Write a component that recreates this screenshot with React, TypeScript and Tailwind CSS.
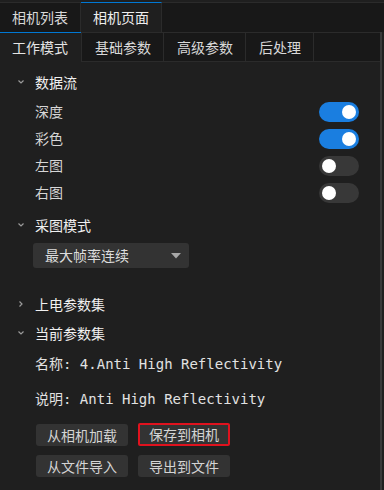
import { useState } from "react";

const cjk = "font-['Noto_Sans_CJK_SC',sans-serif]";
const mono = "font-['DejaVu_Sans_Mono','Noto_Sans_CJK_SC',monospace]";

function Chevron({ open }: { open: boolean }) {
  return (
    <svg width="10" height="10" viewBox="0 0 10 10" className="shrink-0">
      {open ? (
        <path d="M2.5 3.5 L5 6 L7.5 3.5" fill="none" stroke="#9a9a9a" strokeWidth="1.2" />
      ) : (
        <path d="M3.5 2.5 L6 5 L3.5 7.5" fill="none" stroke="#9a9a9a" strokeWidth="1.2" />
      )}
    </svg>
  );
}

function Toggle({ on, onClick }: { on: boolean; onClick: () => void }) {
  return (
    <button
      onClick={onClick}
      className={`w-[40px] h-[20px] rounded-full flex items-center px-[3px] ${
        on ? "bg-[#1a7ee0] justify-end" : "bg-[#383838] justify-start"
      }`}
    >
      <span className="w-[14px] h-[14px] rounded-full bg-white" />
    </button>
  );
}

function SectionHeader({ title, open }: { title: string; open: boolean }) {
  return (
    <div className="h-[28px] flex items-center pl-[16px] gap-[9px]">
      <Chevron open={open} />
      <span className="text-[14px] text-[#f0f0f0]">{title}</span>
    </div>
  );
}

export default function App() {
  const [streams, setStreams] = useState({ 深度: true, 彩色: true, 左图: false, 右图: false });

  return (
    <div className={`w-[384px] h-[490px] bg-[#1f1f1f] overflow-hidden ${cjk}`}>
      {/* top tabs */}
      <div className="mt-[2px] h-[30px] flex bg-[#181818] border-t border-[#2b2b2b]">
        <div className="w-[81px] flex items-center px-[12px] text-[14px] text-[#d8d8d8] border-r border-[#2b2b2b]">
          相机列表
        </div>
        <div className="w-[81px] -mt-px flex items-center px-[12px] text-[14px] text-[#eeeeee] bg-[#1f1f1f] border-t border-[#0078d4] border-r border-r-[#2b2b2b]">
          相机页面
        </div>
      </div>

      <div className="flex">
        <div className="w-[380px] shrink-0">
          {/* sub tabs */}
          <div className="h-[30px] flex">
            <div className="w-[81px] flex items-center px-[12px] text-[14px] text-[#e4e4e4] bg-[#1f1f1f] border-t border-[#0078d4]">
              工作模式
            </div>
            {["基础参数", "高级参数", "后处理"].map((t) => (
              <div
                key={t}
                className="flex items-center pl-[13px] pr-[12px] text-[14px] text-[#d8d8d8] bg-[#181818] border-t border-b border-l border-[#2b2b2b]"
              >
                {t}
              </div>
            ))}
            <div className="flex-1 bg-[#181818] border-t border-b border-l border-[#2b2b2b]" />
          </div>

          {/* content */}
          <div className="pt-[6px]">
            <SectionHeader title="数据流" open />
            <div className="mt-[2px]">
              {(Object.keys(streams) as (keyof typeof streams)[]).map((k) => (
                <div key={k} className="h-[27px] flex items-center justify-between pl-[35px] pr-[21px]">
                  <span className="text-[14px] text-[#d6d6d6]">{k}</span>
                  <Toggle on={streams[k]} onClick={() => setStreams((s) => ({ ...s, [k]: !s[k] }))} />
                </div>
              ))}
            </div>

            <div className="mt-[5px]">
              <SectionHeader title="采图模式" open />
            </div>
            <div className="mt-[4px] ml-[33px] w-[156px] h-[25px] rounded-[3px] bg-[#333333] flex items-center justify-between pl-[12px] pr-[8px]">
              <span className="text-[14px] text-[#dcdcdc]">最大帧率连续</span>
              <svg width="10" height="6" viewBox="0 0 10 6">
                <path d="M0 0 L10 0 L5 5.5 Z" fill="#a8a8a8" />
              </svg>
            </div>

            <div className="mt-[22px]">
              <SectionHeader title="上电参数集" open={false} />
            </div>
            <div className="mt-[1px]">
              <SectionHeader title="当前参数集" open />
            </div>

            <div className={`h-[35px] flex items-center pl-[35px] text-[14px] text-[#e2e2e2] ${mono}`}>
              名称: 4.Anti High Reflectivity
            </div>
            <div className={`h-[35px] flex items-center pl-[35px] text-[14px] text-[#e2e2e2] ${mono}`}>
              说明: Anti High Reflectivity
            </div>

            <div className="mt-[7px] pl-[36px] grid grid-cols-[92px_92px] gap-x-[10px] gap-y-[9px]">
              <button className="h-[22px] rounded-[3px] bg-[#333333] text-[14px] text-[#d4d4d4] flex items-center justify-center">
                从相机加载
              </button>
              <button className="h-[23px] -mt-px rounded-[2px] bg-[#333333] border-2 border-[#e0121e] text-[14px] text-[#d4d4d4] flex items-center justify-center">
                保存到相机
              </button>
              <button className="h-[22px] rounded-[3px] bg-[#333333] text-[14px] text-[#d4d4d4] flex items-center justify-center">
                从文件导入
              </button>
              <button className="h-[22px] rounded-[3px] bg-[#333333] text-[14px] text-[#d4d4d4] flex items-center justify-center">
                导出到文件
              </button>
            </div>
          </div>
        </div>
        <div className="w-[2px] h-[460px] bg-[#383838]" />
      </div>
    </div>
  );
}
